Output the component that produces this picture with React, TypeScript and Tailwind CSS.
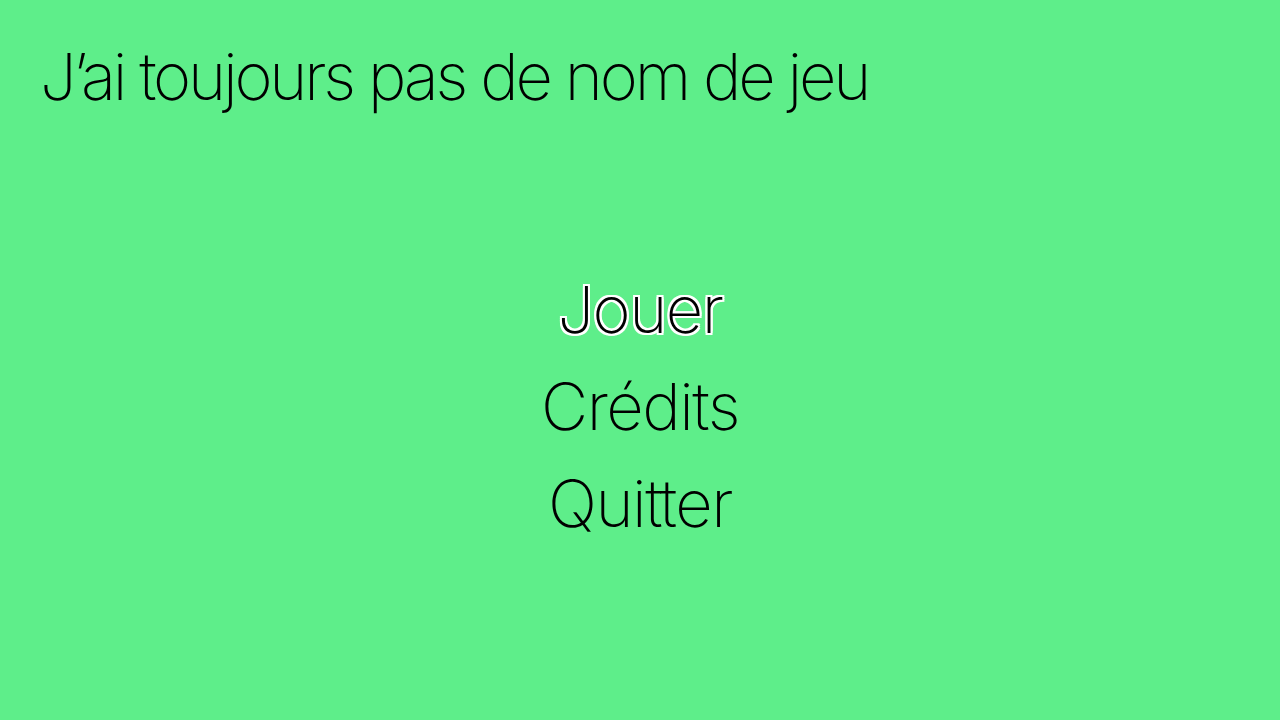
const menuItems = ['Jouer', 'Crédits', 'Quitter']

const App = () => {
	return (
		<div className="flex flex-col w-full h-[720px] bg-[#5eee8a] text-black font-['Inter',sans-serif] font-extralight overflow-hidden">
			<header className="pl-[40px] pt-[32px]">
				<h1 className="text-[65px] leading-[90px] tracking-[-3.2px]">J’ai toujours pas de nom de jeu</h1>
			</header>
			<nav className="flex flex-col items-center pt-[139px]">
				{menuItems.map((item, index) => (
					<div
						key={index}
						className={`text-[65px] leading-[97px] tracking-[-1.5px] cursor-pointer ${index === 0 ? '[text-shadow:-2px_-2px_0_#fff,2px_-2px_0_#fff,-2px_2px_0_#fff,2px_2px_0_#fff,0_2px_0_#fff,0_-2px_0_#fff,2px_0_0_#fff,-2px_0_0_#fff]' : ''}`}
					>
						{item}
					</div>
				))}
			</nav>
		</div>
	)
}

export default App
